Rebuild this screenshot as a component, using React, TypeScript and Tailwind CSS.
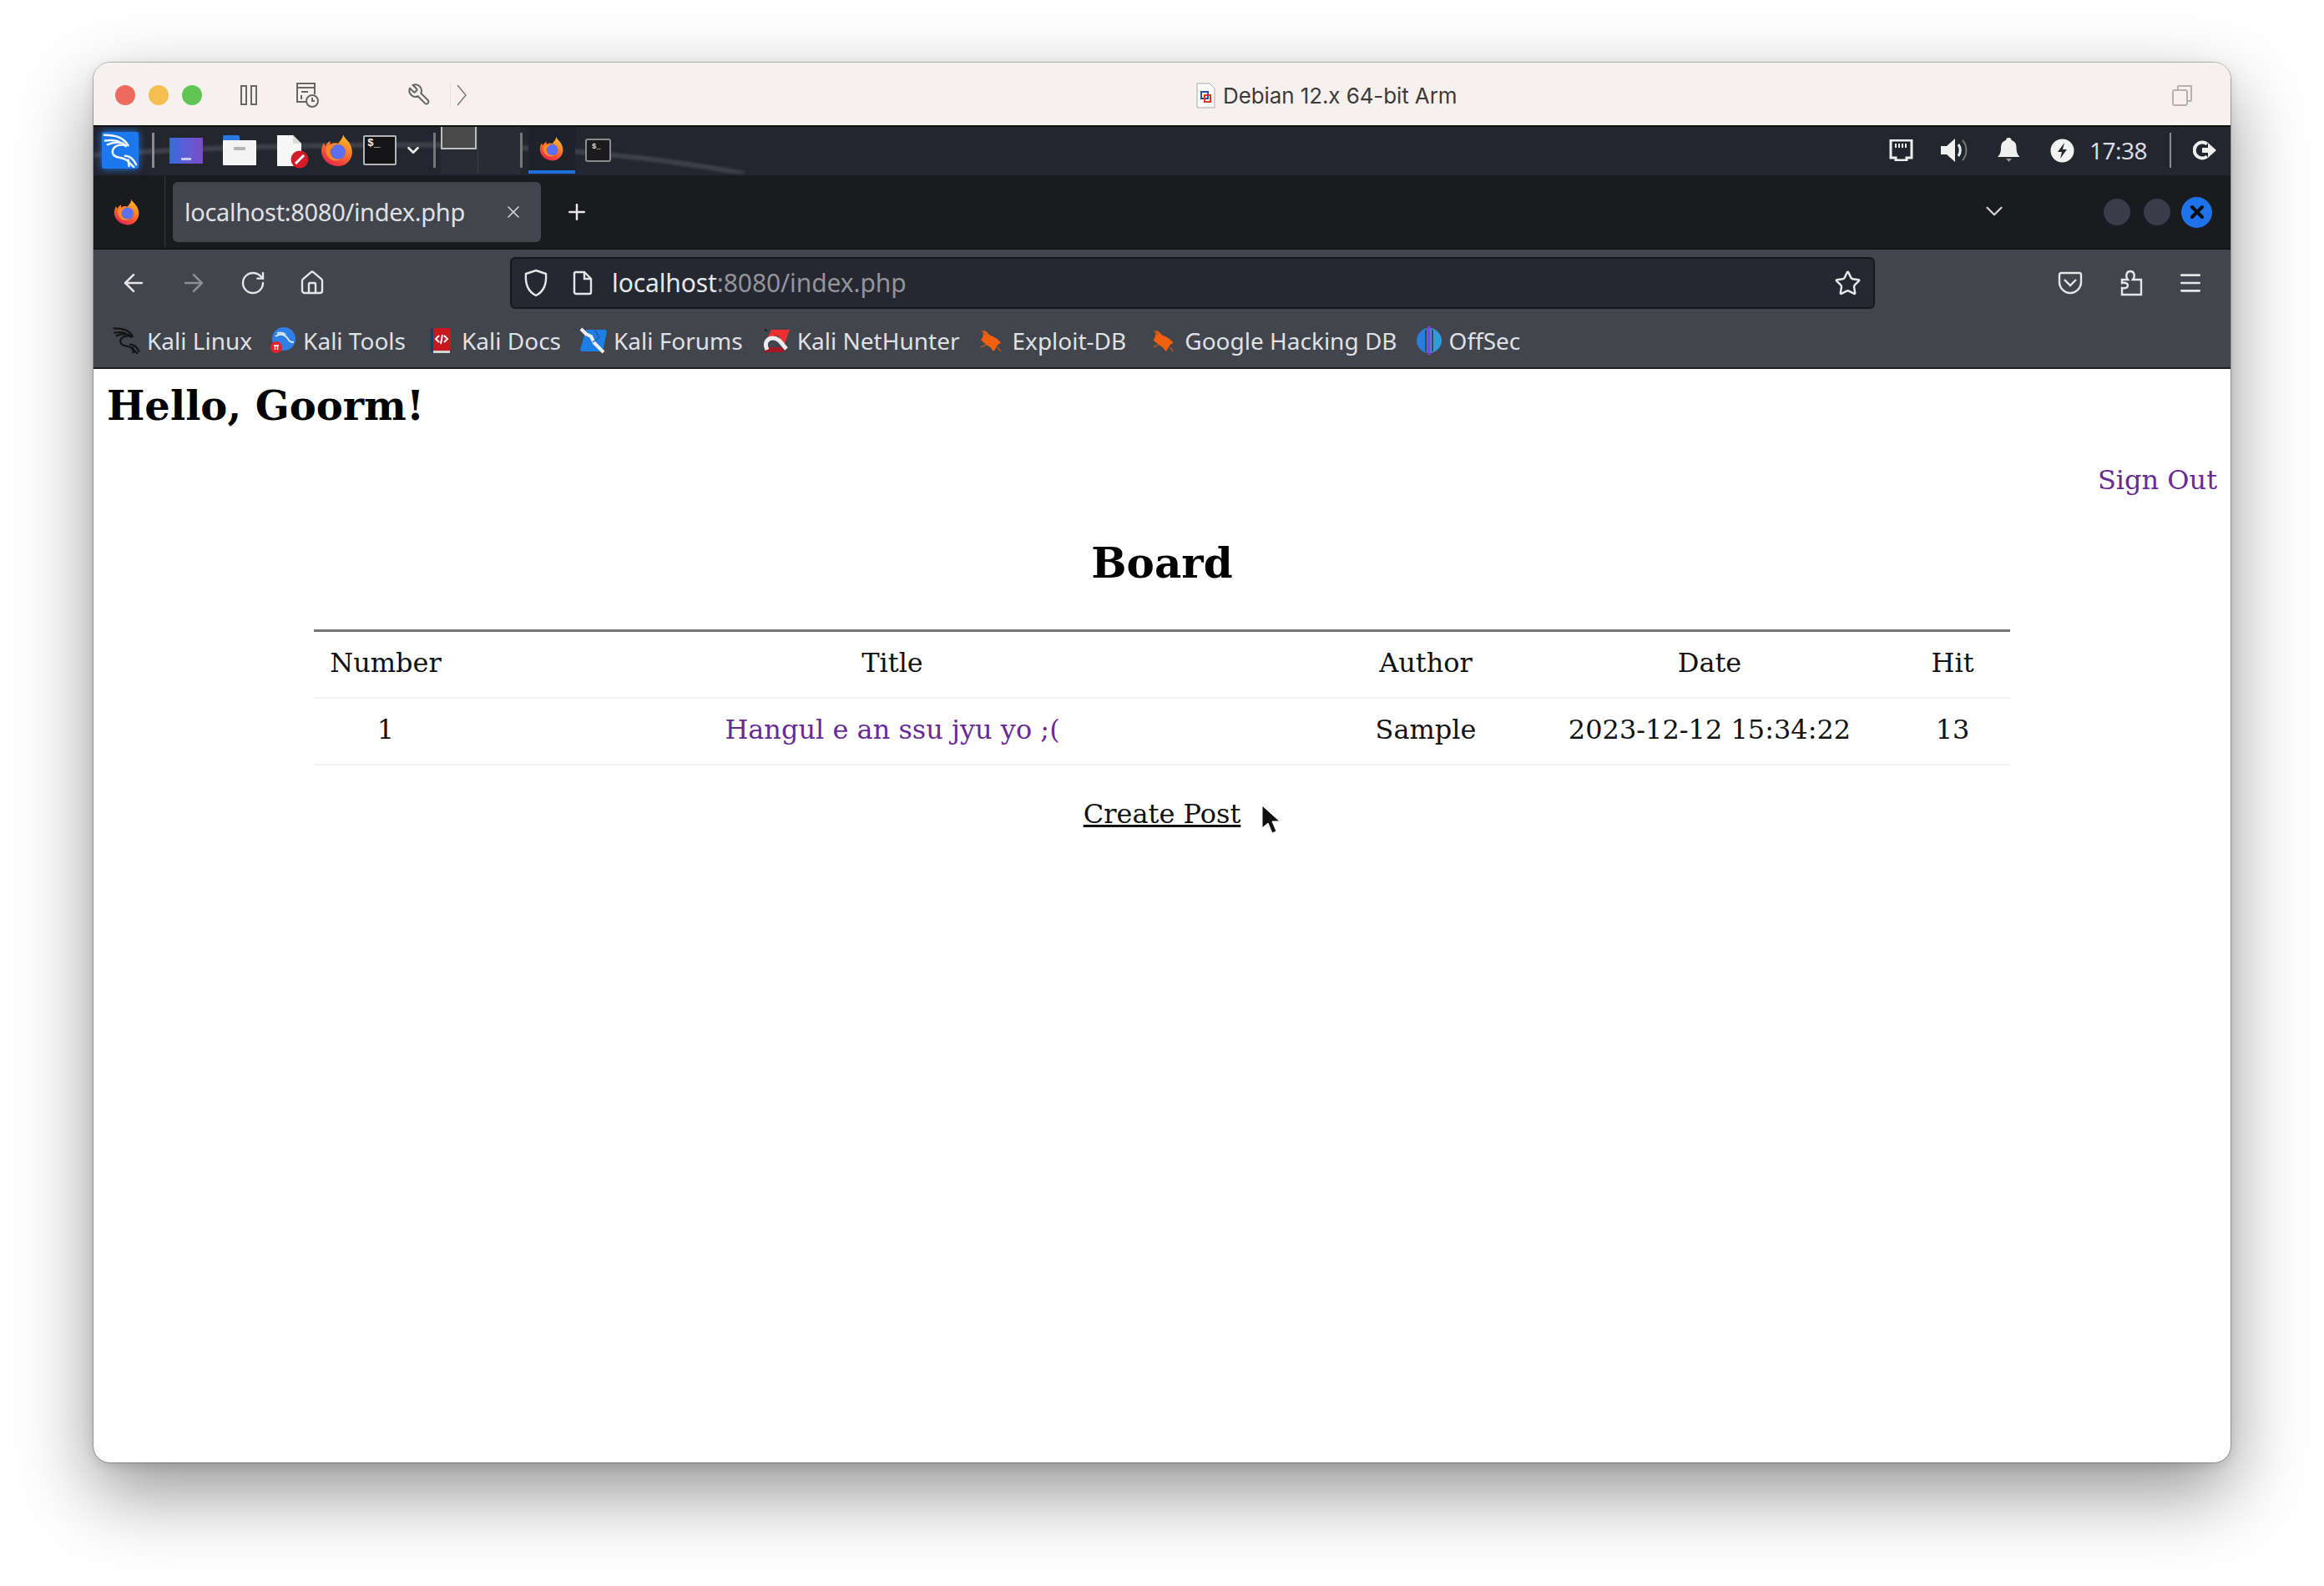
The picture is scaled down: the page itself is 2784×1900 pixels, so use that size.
import { ArrowLeft, ArrowRight, ChevronDown, Home, Menu, Plus, RotateCw, Star, X } from 'lucide-react';

const BOOKMARKS = [
  { label: 'Kali Linux', icon: 'dragon', w: 33, gap: 8, ml: 0 },
  { label: 'Kali Tools', icon: 'tools', w: 30, gap: 9, ml: 22 },
  { label: 'Kali Docs', icon: 'docs', w: 25, gap: 12, ml: 30 },
  { label: 'Kali Forums', icon: 'forums', w: 33, gap: 8, ml: 22 },
  { label: 'Kali NetHunter', icon: 'nethunter', w: 32, gap: 9, ml: 24 },
  { label: 'Exploit-DB', icon: 'bug', w: 28, gap: 12, ml: 23 },
  { label: 'Google Hacking DB', icon: 'bug', w: 29, gap: 11, ml: 30 },
  { label: 'OffSec', icon: 'offsec', w: 30, gap: 9, ml: 23 },
];

const POSTS = [{ id: 1, title: 'Hangul e an ssu jyu yo ;(', author: 'Sample', date: '2023-12-12 15:34:22', hit: 13 }];

// kali dragon, hand drawn
const Dragon = ({ size, color, stroke }: { size: number; color: string; stroke: number }) => (
  <svg width={size} height={size} viewBox="0 0 44 44" fill="none" stroke={color} strokeWidth={stroke} strokeLinecap="round" strokeLinejoin="round">
    <path d="M2 3c8 0 14 1 19 3 5 2 8 5 11 10" />
    <path d="M3 10c6-1 12-1 17 1" />
    <path d="M6 15c4-2 8-3 13-3 5 0 8 2 10 5" />
    <path d="M29 16c-7-2-14 0-16 5-2 5 1 9 7 10 6 1 11 3 14 7l5 5" />
    <path d="M28 29c4 0 8 2 11 6l3 5" />
    <path d="M32 34l1 8" />
  </svg>
);

const Firefox = ({ size, className }: { size: number; className?: string }) => (
  <svg width={size} height={size} viewBox="0 0 40 40" className={className}>
    <defs>
      <linearGradient id="ffOuter" x1="0.8" y1="0" x2="0.3" y2="1">
        <stop offset="0" stopColor="#ffc12e" />
        <stop offset="0.45" stopColor="#ff7a24" />
        <stop offset="1" stopColor="#e5234f" />
      </linearGradient>
    </defs>
    <path d="M27 1c1 4 5 6 8 11 4 7 4 15-1 21-4 5-10 7-15 6C9 38 2 31 1 22c0-4 1-8 3-11 0 2 1 3 2 4 1-3 3-5 6-6-1 2-1 3 0 4 3-2 6-2 9-1 3-4 6-7 6-11z" fill="url(#ffOuter)" />
    <circle cx="21" cy="22" r="9" fill="#5b6ff0" />
    <path d="M7 16c3-2 6-2 9 0-4 1-6 5-4 9 2 5 8 7 13 5-5 4-12 3-16-2-3-4-3-8-2-12z" fill="#ff8a2a" />
  </svg>
);

const TermIcon = ({ small }: { small?: boolean }) => (
  <div className={small ? 'flex w-[31px] h-[28px] border-2 border-[#8c8c8c] rounded-[3px] bg-[#1b1b1d] pl-[6px] pt-[2px]' : 'flex w-[40px] h-[36px] border-2 border-[#b5b5b5] rounded-[2px] bg-[#141416] pl-[3px]'}>
    <span className={small ? "font-['Liberation_Mono',monospace] text-[9px] leading-[12px] font-bold text-[#ddd]" : "font-['Liberation_Mono',monospace] text-[13px] leading-[16px] font-bold text-[#eee]"}>$_</span>
  </div>
);

const BookmarkIcon = ({ kind, w }: { kind: string; w: number }) => {
  if (kind === 'dragon') return <Dragon size={w} color="#141417" stroke={3} />;
  if (kind === 'tools')
    return (
      <svg width={w} height="32" viewBox="0 0 30 32">
        <circle cx="16" cy="14" r="14" fill="#2f7fe8" />
        <path d="M6 11c6-4 12-2 15 3 1 3 4 4 7 4M8 7c4-1 8 0 10 2" stroke="#d8e8fa" strokeWidth="2" fill="none" />
        <circle cx="7" cy="24" r="7" fill="#e5232b" />
        <path d="M4 22h6M5.5 22v5M8.5 22v5" stroke="#fff" strokeWidth="1.4" />
      </svg>
    );
  if (kind === 'docs')
    return (
      <svg width={w} height="32" viewBox="0 0 25 32">
        <rect x="2" y="1" width="22" height="27" rx="1" fill="#c8181e" />
        <rect x="0" y="1" width="3" height="29" fill="#1d3a6e" />
        <rect x="3" y="28" width="20" height="3" fill="#d5d5d5" />
        <path d="M10 10l-4 4 4 4M16 10l4 4-4 4M14 9l-2 11" stroke="#fff" strokeWidth="2" fill="none" />
      </svg>
    );
  if (kind === 'forums')
    return (
      <svg width={w} height="32" viewBox="0 0 33 32">
        <path d="M8 3h23l2 2-5 24H3L1 27z" fill="#1f7de6" />
        <path d="M2 2l6 6 6 3 4 8 11 11" stroke="#efefef" strokeWidth="4" fill="none" />
        <path d="M18 3l6 9-8 6" stroke="#1f5fae" strokeWidth="1.5" fill="none" />
      </svg>
    );
  if (kind === 'nethunter')
    return (
      <svg width={w} height="32" viewBox="0 0 32 32">
        <path d="M10 3h22l-6 17L18 10 6 12z" fill="#ee2f2f" />
        <path d="M1 30l4-6h18l3 6z" fill="#a31826" />
        <path d="M5 27c-4-8 0-14 7-14s10 6 16 13" stroke="#ececec" strokeWidth="5" fill="none" />
        <path d="M2 2l3 3" stroke="#222" strokeWidth="2" />
      </svg>
    );
  if (kind === 'bug')
    return (
      <svg width={w} height="32" viewBox="0 0 28 32">
        <path d="M5 4c4 0 5 4 9 6 5 2 10 5 12 9-3 1-4 2-6 6l-3 4c-2-3-3-5-7-7-4-3-6-5-8-7 3-2 3-7 3-11z" fill="#f1600d" />
        <path d="M3 4l5 5M22 24l4 5M2 24l6-3" stroke="#b0562a" strokeWidth="1.5" />
      </svg>
    );
  return (
    <svg width={w} height="34" viewBox="0 0 30 34">
      <ellipse cx="15" cy="17" rx="15" ry="15" fill="#2a7de0" />
      <path d="M15 2C22 2 30 9 30 17s-8 15-15 15z" fill="#2e9cd8" />
      <path d="M15 0v34" stroke="#8a3fd6" strokeWidth="3" />
      <path d="M11 4v26M19 4v26" stroke="#43454d" strokeWidth="2" />
    </svg>
  );
};

export default function App() {
  return (
    <div className="min-h-[1900px] bg-white pt-[75px] pl-[112px] overflow-hidden">
      <div className="relative flex flex-col w-[2560px] h-[1677px] rounded-[20px] overflow-hidden bg-white outline outline-1 outline-[#00000040] shadow-[0_36px_90px_rgba(0,0,0,0.42),0_4px_14px_rgba(0,0,0,0.12)]">
        {/* parallels title bar */}
        <div className="relative flex items-center h-[77px] shrink-0 bg-[#f6f1ee] border-b-2 border-[#111] pt-[2px] pl-[26px]">
          <span className="w-[24px] h-[24px] rounded-full bg-[#ed6a5e]" />
          <span className="w-[24px] h-[24px] rounded-full bg-[#f4bf4f] ml-[16px]" />
          <span className="w-[24px] h-[24px] rounded-full bg-[#61c554] ml-[16px]" />
          <svg width="20" height="24" viewBox="0 0 20 24" className="ml-[46px]" fill="none" stroke="#666" strokeWidth="2">
            <rect x="1" y="1" width="6" height="22" />
            <rect x="13" y="1" width="6" height="22" />
          </svg>
          <svg width="28" height="30" viewBox="0 0 28 30" className="ml-[46px]" fill="none" stroke="#666" strokeWidth="2">
            <path d="M14 23H2V1h21v13M2 6h21M7 11h8M7 15v5" />
            <circle cx="20" cy="22" r="7" />
            <path d="M20 18v4h3" />
          </svg>
          <svg width="29" height="29" viewBox="0 0 24 24" className="ml-[106px]" fill="none" stroke="#666" strokeWidth="1.7">
            <path d="M14.7 6.3a1 1 0 0 0 0 1.4l1.6 1.6a1 1 0 0 0 1.4 0l3.77-3.77a6 6 0 0 1-7.94 7.94l-6.91 6.91a2.12 2.12 0 0 1-3-3l6.91-6.91a6 6 0 0 1 7.94-7.94l-3.76 3.76z" transform="matrix(-1 0 0 1 24 0)" />
          </svg>
          <span className="w-[1px] h-[28px] bg-[#ddd] ml-[22px]" />
          <svg width="12" height="26" viewBox="0 0 12 26" className="ml-[7px]" fill="none" stroke="#777" strokeWidth="1.4">
            <path d="M1 1l10 12L1 25" />
          </svg>
          <div className="absolute left-[1321px] top-[24px] flex items-center">
            <svg width="23" height="31" viewBox="0 0 23 31">
              <path d="M1 1h15l6 6v23H1z" fill="#fbfbfb" stroke="#aaa" />
              <rect x="6" y="11" width="8" height="8" fill="none" stroke="#2450a8" strokeWidth="2" />
              <rect x="10" y="15" width="7" height="8" fill="none" stroke="#e5331f" strokeWidth="2" />
            </svg>
            <span className="ml-[9px] font-['Inter',sans-serif] text-[26px] leading-[30px] text-[#3d3b3a] tracking-[-0.1px]">Debian 12.x 64-bit Arm</span>
          </div>
          <svg width="25" height="25" viewBox="0 0 25 25" className="absolute left-[2490px] top-[27px]" fill="none" stroke="#b5b1ae" strokeWidth="2">
            <rect x="1" y="6" width="17" height="18" rx="2" />
            <path d="M7 6V2a1 1 0 0 1 1-1h15v17a1 1 0 0 1-1 1h-4" />
          </svg>
        </div>

        {/* xfce panel */}
        <div className="relative flex items-center h-[58px] shrink-0 bg-[#23252f] pb-[2px] pl-[10px] pr-[17px]">
          <svg width="780" height="56" viewBox="0 0 780 56" className="absolute left-0 top-0 blur-[1.5px]" fill="none">
            <path d="M0 34C120 24 320 20 430 22c120 2 240 14 350 34" stroke="#5b5d66" strokeWidth="6" opacity="0.5" />
          </svg>
          <div className="relative flex items-center justify-center w-[44px] h-[44px] bg-[#1b78ee] rounded-[3px] shadow-[0_0_8px_#1b78ee]">
            <Dragon size={42} color="#f2f6fb" stroke={2.6} />
          </div>
          <span className="relative w-[3px] h-[42px] bg-[#8a8b90] ml-[16px]" />
          <div className="relative w-[40px] h-[31px] ml-[18px] rounded-[1px] bg-gradient-to-r from-[#2f6be0] to-[#7a4bc7] flex items-end justify-center pb-[4px]">
            <span className="w-[12px] h-[3px] bg-[#c5c8f0]" />
          </div>
          <div className="relative ml-[24px] w-[40px] h-[36px]">
            <div className="w-[20px] h-[8px] bg-[#2b78e4] rounded-t-[2px]" />
            <div className="w-[40px] h-[30px] -mt-[2px] bg-[#f4f4f4] rounded-[1px] flex justify-center pt-[8px]">
              <span className="w-[14px] h-[4px] bg-[#b4b4b4] rounded-[1px]" />
            </div>
          </div>
          <div className="relative ml-[24px] w-[32px] h-[39px]">
            <svg width="32" height="39" viewBox="0 0 32 39">
              <path d="M1 1h19l10 10v27H1z" fill="#f7f7f7" />
              <path d="M20 1l10 10H20z" fill="#d9d9d9" />
            </svg>
            <svg width="22" height="22" viewBox="0 0 22 22" className="absolute left-[17px] top-[19px]">
              <circle cx="11" cy="11" r="10.5" fill="#d41c28" />
              <path d="M6 16L16 6" stroke="#fff" strokeWidth="3" />
            </svg>
          </div>
          <Firefox size={40} className="relative ml-[21px]" />
          <div className="relative ml-[11px]"><TermIcon /></div>
          <ChevronDown size={22} color="#e8e8e8" strokeWidth={3} className="relative ml-[9px]" />
          <span className="relative w-[3px] h-[42px] bg-[#777] ml-[13px]" />
          <div className="relative self-start flex w-[95px] h-[56px] ml-[6px] bg-[#2a2c35]">
            <div className="w-[43px] h-[27px] bg-[#4a4a4a] border-2 border-t-0 border-[#bdbdbd]" />
            <div className="w-[1px] h-full ml-[1px] bg-[#3d3f49]" />
          </div>
          <span className="relative w-[3px] h-[42px] bg-[#777]" />
          <div className="relative flex items-center justify-center self-stretch w-[56px] ml-[7px] border-b-4 border-[#1f6fe0] bg-[#20222b]">
            <Firefox size={30} />
          </div>
          <div className="relative ml-[12px]"><TermIcon small /></div>

          <div className="ml-auto flex items-center">
            <svg width="29" height="26" viewBox="0 0 29 26">
              <path d="M2 1h25v21h-6v3H8v-3H2z" fill="none" stroke="#eee" strokeWidth="3" />
              <path d="M8 5v5M12 5v5M16 5v5M20 5v5" stroke="#eee" strokeWidth="2" />
            </svg>
            <svg width="33" height="30" viewBox="0 0 33 30" className="ml-[33px]">
              <path d="M0 10h7l10-9v28L7 20H0z" fill="#f0f0f0" />
              <path d="M21 8c3 4 3 10 0 14" stroke="#f0f0f0" strokeWidth="3" fill="none" />
              <path d="M26 3c6 7 6 17 0 24" stroke="#777" strokeWidth="2" fill="none" />
            </svg>
            <svg width="27" height="30" viewBox="0 0 27 30" className="ml-[35px]">
              <path d="M13.5 0c2 0 3 1 3 3 4 1 6 4 6 9 0 5 1 8 4 11H0c3-3 4-6 4-11 0-5 2-8 6-9 0-2 1-3 3.5-3z" fill="#efefef" />
              <path d="M10 25h7l-3.5 4z" fill="#999" />
            </svg>
            <svg width="29" height="29" viewBox="0 0 29 29" className="ml-[36px]">
              <circle cx="14.5" cy="14.5" r="14" fill="#f2f2f2" />
              <path d="M17 5l-8 11h5l-2 8 8-11h-5z" fill="#23252f" />
            </svg>
            <span className="ml-[18px] w-[72px] font-['Noto_Sans',sans-serif] text-[28px] leading-[34px] text-[#d8dde2] tracking-[-0.5px]">17:38</span>
            <span className="w-[2px] h-[42px] bg-[#8a8b90] ml-[24px]" />
            <svg width="28" height="26" viewBox="0 0 28 26" className="ml-[26px]" fill="none">
              <path d="M17 5.5A9.5 9.5 0 1 0 17 20.5" stroke="#eee" strokeWidth="4" />
              <path d="M11 10h7V4l10 9-10 9v-6h-7z" fill="#eee" />
            </svg>
          </div>
        </div>

        {/* firefox tab strip */}
        <div className="relative flex items-center h-[87px] shrink-0 bg-[#1a1b1f] pl-[24px] pt-[1px]">
          <Firefox size={32} />
          <span className="w-[1px] self-stretch bg-[#3a3b40] ml-[29px]" />
          <div className="flex items-center w-[441px] h-[72px] ml-[9px] pl-[14px] bg-[#43454d] rounded-[6px]">
            <span className="font-['Noto_Sans',sans-serif] text-[29px] leading-[36px] text-[#dfe1e5] tracking-[-0.3px] whitespace-nowrap">localhost:8080/index.php</span>
            <X size={24} color="#d5d5d8" strokeWidth={1.6} className="ml-auto mr-[21px]" />
          </div>
          <Plus size={30} color="#e8e8ea" strokeWidth={2} className="ml-[28px]" />
          <ChevronDown size={34} color="#d0d0d2" strokeWidth={1.6} className="absolute left-[2260px] top-[26px]" />
          <div className="ml-auto mr-[22px] flex items-center">
            <span className="w-[32px] h-[32px] rounded-full bg-[#3a3d49]" />
            <span className="w-[32px] h-[32px] rounded-full bg-[#3a3d49] ml-[16px]" />
            <span className="flex items-center justify-center w-[37px] h-[37px] rounded-full bg-[#1f73ea] ml-[13px]">
              <X size={24} color="#0b0d12" strokeWidth={4} />
            </span>
          </div>
        </div>

        {/* nav bar + bookmarks */}
        <div className="flex flex-col h-[145px] shrink-0 bg-[#43454d] border-t-2 border-[#131316] border-b-2 border-b-[#1c1d20]">
          <div className="flex items-center h-[72px] pt-[8px] pl-[31px]">
            <ArrowLeft size={34} color="#e6e6e8" strokeWidth={1.8} />
            <ArrowRight size={34} color="#8d8f94" strokeWidth={1.8} className="ml-[38px]" />
            <RotateCw size={32} color="#e6e6e8" strokeWidth={1.8} className="ml-[38px]" />
            <Home size={32} color="#e6e6e8" strokeWidth={1.8} className="ml-[39px]" />
            <div className="flex items-center w-[1635px] h-[62px] ml-[221px] pl-[14px] pr-[14px] bg-[#252731] border-2 border-[#17181c] rounded-[6px]">
              <svg width="30" height="34" viewBox="0 0 30 34" fill="none" stroke="#e6e6e8" strokeWidth="2.4">
                <path d="M15 2l12 4c1 12-2 21-12 26C5 27 2 18 3 6z" />
              </svg>
              <svg width="24" height="30" viewBox="0 0 24 30" fill="none" stroke="#e6e6e8" strokeWidth="2.4" className="ml-[29px]">
                <path d="M3 2h11l8 8v16a2 2 0 0 1-2 2H4a2 2 0 0 1-2-2V3z" />
                <path d="M14 2v8h8" />
              </svg>
              <span className="ml-[23px] font-['Noto_Sans',sans-serif] text-[30px] leading-[36px] tracking-[-0.1px] text-[#92949a]"><span className="text-[#e8e8ea]">localhost</span>:8080/index.php</span>
              <Star size={33} color="#e6e6e8" strokeWidth={1.8} className="ml-auto" />
            </div>
            <svg width="30" height="30" viewBox="0 0 30 30" className="ml-[219px]" fill="none" stroke="#e6e6e8" strokeWidth="2.4">
              <path d="M4 3h22a2 2 0 0 1 2 2v9c0 7-6 13-13 13S2 21 2 14V5a2 2 0 0 1 2-2z" />
              <path d="M8 11l7 7 7-7" />
            </svg>
            <svg width="30" height="32" viewBox="0 0 30 32" className="ml-[44px]" fill="none" stroke="#e6e6e8" strokeWidth="2.4">
              <path d="M3 12h7c-3-4-2-10 3-10s6 6 3 10h10v18H3v-8c5 1 7-1 7-3s-2-4-7-3z" />
            </svg>
            <Menu size={32} color="#e6e6e8" strokeWidth={2} className="ml-[39px]" />
          </div>
          <div className="flex items-center h-[66px] pt-[7px] pl-[23px] font-['Noto_Sans',sans-serif] text-[28px] text-[#dfe1e5]">
            {BOOKMARKS.map(b => (
              <div key={b.label} className="flex items-center" style={{ marginLeft: b.ml }}>
                <BookmarkIcon kind={b.icon} w={b.w} />
                <span className="leading-[36px] whitespace-nowrap" style={{ marginLeft: b.gap }}>{b.label}</span>
              </div>
            ))}
          </div>
        </div>

        {/* the php page */}
        <div className="relative flex-1 flex flex-col px-[16px] font-['DejaVu_Serif',serif] text-[32px] text-[#111]">
          <h1 className="text-[48px] leading-[56px] font-bold mt-[16px] text-black">Hello, Goorm!</h1>
          <div className="flex justify-end mt-[42px]">
            <a className="text-[#6a2a96] leading-[38px]">Sign Out</a>
          </div>
          <h2 className="text-center text-[50px] leading-[56px] font-bold mt-[53px] text-black">Board</h2>
          <table className="table-fixed w-[2032px] mt-[51px] mx-auto border-t-[3px] border-[#777] border-collapse">
            <colgroup>
              <col className="w-[172px]" />
              <col className="w-[1042px]" />
              <col className="w-[236px]" />
              <col className="w-[444px]" />
              <col className="w-[138px]" />
            </colgroup>
            <thead>
              <tr className="h-[80px] border-b-2 border-[#f1f1f1]">
                <th className="font-normal pb-[3px]">Number</th>
                <th className="font-normal pb-[3px]">Title</th>
                <th className="font-normal pb-[3px]">Author</th>
                <th className="font-normal pb-[3px]">Date</th>
                <th className="font-normal pb-[3px]">Hit</th>
              </tr>
            </thead>
            <tbody>
              {POSTS.map(p => (
                <tr key={p.id} className="h-[80px] border-b-2 border-[#f1f1f1] text-center">
                  <td className="pb-[3px]">{p.id}</td>
                  <td className="pb-[3px] text-[#6a2a96]">{p.title}</td>
                  <td className="pb-[3px]">{p.author}</td>
                  <td className="pb-[3px]">{p.date}</td>
                  <td className="pb-[3px]">{p.hit}</td>
                </tr>
              ))}
            </tbody>
          </table>
          <div className="text-center mt-[34px]">
            <a className="underline leading-[38px]">Create Post</a>
          </div>
          <svg width="24" height="38" viewBox="0 0 24 38" className="absolute left-[1398px] top-[522px]">
            <path d="M2 1v27l7-6 5 12 5-2-5-12h9z" fill="#111" stroke="#fff" strokeWidth="1" />
          </svg>
        </div>
      </div>
    </div>
  );
}
